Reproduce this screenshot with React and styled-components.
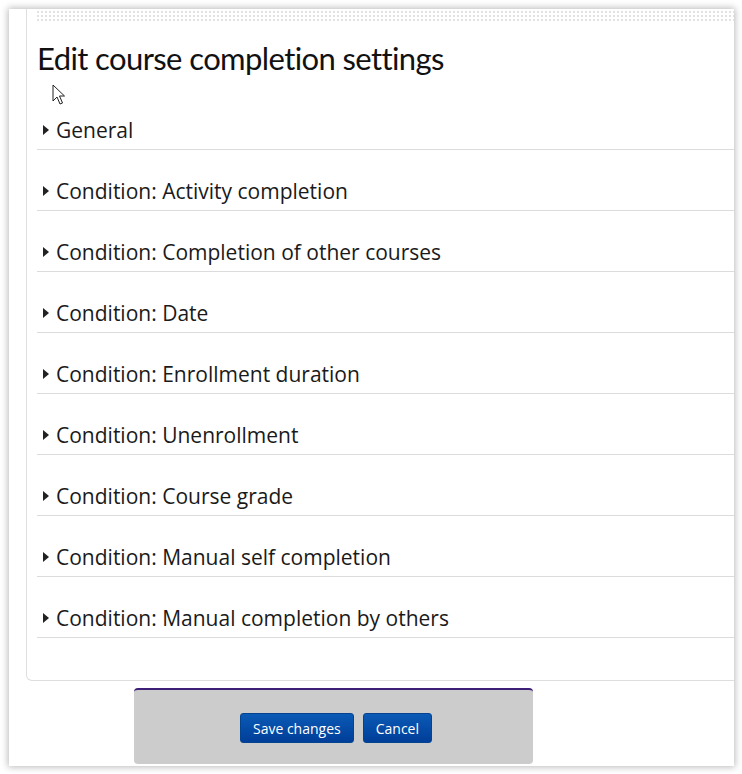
import React from 'react';
import styled, { createGlobalStyle } from 'styled-components';

const sections = [
  'General',
  'Condition: Activity completion',
  'Condition: Completion of other courses',
  'Condition: Date',
  'Condition: Enrollment duration',
  'Condition: Unenrollment',
  'Condition: Course grade',
  'Condition: Manual self completion',
  'Condition: Manual completion by others',
];

const Global = createGlobalStyle`
  html, body {
    margin: 0;
    padding: 0;
    background: #ffffff;
  }
  body {
    width: 742px;
    height: 774px;
    overflow: hidden;
  }
`;

const Frame = styled.div`
  position: relative;
  margin: 9px 0 0 9px;
  width: 725px;
  height: 757px;
  background: #fff;
  box-shadow: 0 0 7px 1px rgba(0, 0, 0, 0.28);
  overflow: hidden;
  padding-left: 17px;
  box-sizing: border-box;
`;

const Card = styled.div`
  width: 760px;
  border: 1px solid #dedede;
  border-top: none;
  border-radius: 0 0 6px 6px;
  padding: 2px 0 42px 10px;
  box-sizing: border-box;
`;

const Dots = styled.div`
  height: 10px;
  background-image: linear-gradient(90deg, transparent 2px, #fff 2px),
    linear-gradient(#e2e2e2 2px, transparent 2px);
  background-size: 4px 4px;
`;

const Title = styled.h2`
  margin: 0;
  padding-top: 17px;
  height: 68px;
  box-sizing: border-box;
  font-family: 'Lato', 'Noto Sans', sans-serif;
  font-weight: 400;
  font-size: 31px;
  line-height: 40px;
  letter-spacing: -0.6px;
  color: #111;
`;

const List = styled.div`
  display: flex;
  flex-direction: column;
`;

const Row = styled.div`
  display: flex;
  align-items: center;
  gap: 7px;
  height: 61px;
  padding: 21px 0 0 6px;
  box-sizing: border-box;
  border-bottom: 1px solid #dcdcdc;
  font-family: 'Open Sans', 'Noto Sans', sans-serif;
  font-size: 21px;
  line-height: 28px;
  color: #1a1a1a;
`;

const Caret = styled.span`
  width: 0;
  height: 0;
  margin-top: 1px;
  border-top: 5px solid transparent;
  border-bottom: 5px solid transparent;
  border-left: 6px solid #222;
`;

const Cursor = styled.svg`
  position: absolute;
  left: 43px;
  top: 75px;
`;

const Actions = styled.div`
  margin: 7px 0 0 108px;
  width: 399px;
  height: 76px;
  background: #cccccc;
  border-top: 2px solid #3d1f78;
  border-radius: 4px;
  box-sizing: border-box;
  display: flex;
  justify-content: center;
  gap: 9px;
  padding: 23px 0 0 5px;
`;

const Button = styled.button`
  height: 30px;
  padding: 0 ${(p) => p.$pad}px;
  border: 1px solid #04438f;
  border-radius: 3px;
  background: linear-gradient(#0a5ab5, #003e99);
  color: #fff;
  font-family: 'Open Sans', 'Noto Sans', sans-serif;
  font-size: 14px;
  cursor: pointer;
`;

export default function App() {
  return (
    <>
      <Global />
      <Frame>
        <Card>
          <Dots />
          <Title>Edit course completion settings</Title>
          <List>
            {sections.map((s) => (
              <Row key={s}>
                <Caret />
                <span>{s}</span>
              </Row>
            ))}
          </List>
        </Card>
        <Actions>
          <Button $pad={12}>Save changes</Button>
          <Button $pad={12}>Cancel</Button>
        </Actions>
        <Cursor width="14" height="22" viewBox="0 0 14 22">
          <path
            d="M1 1 L1 17 L5 13 L8 20 L10.5 19 L7.5 12 L12.5 12 Z"
            fill="#fff"
            stroke="#222"
            strokeWidth="1"
            strokeLinejoin="round"
          />
        </Cursor>
      </Frame>
    </>
  );
}
